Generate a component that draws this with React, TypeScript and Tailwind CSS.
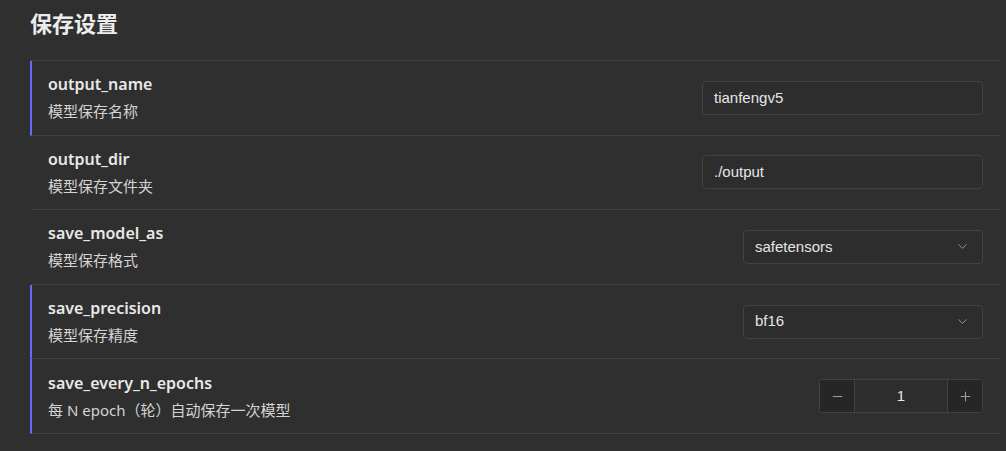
import { ChevronDown, Minus, Plus } from "lucide-react";

type Field =
  | { key: string; desc: string; kind: "text"; value: string; changed?: boolean }
  | { key: string; desc: string; kind: "select"; value: string; changed?: boolean }
  | { key: string; desc: string; kind: "number"; value: number; changed?: boolean };

const fields: Field[] = [
  { key: "output_name", desc: "模型保存名称", kind: "text", value: "tianfengv5", changed: true },
  { key: "output_dir", desc: "模型保存文件夹", kind: "text", value: "./output" },
  { key: "save_model_as", desc: "模型保存格式", kind: "select", value: "safetensors" },
  { key: "save_precision", desc: "模型保存精度", kind: "select", value: "bf16", changed: true },
  { key: "save_every_n_epochs", desc: "每 N epoch（轮）自动保存一次模型", kind: "number", value: 1, changed: true },
];

function Control({ field }: { field: Field }) {
  if (field.kind === "text") {
    return (
      <div className="w-[281px] h-[34px] flex items-center px-[11px] rounded border border-[#434343] bg-[#2d2d2d] text-[15px] text-[#e6e6e6] font-['Liberation_Sans',sans-serif]">
        {field.value}
      </div>
    );
  }
  if (field.kind === "select") {
    return (
      <div className="w-[240px] h-[34px] flex items-center justify-between pl-[11px] pr-3 rounded border border-[#434343] bg-[#2d2d2d] text-[15px] text-[#e6e6e6] font-['Liberation_Sans',sans-serif]">
        <span>{field.value}</span>
        <ChevronDown size={15} strokeWidth={1.5} className="text-[#9a9a9a]" />
      </div>
    );
  }
  return (
    <div className="w-[164px] h-[34px] flex rounded border border-[#434343] overflow-hidden text-[15px] text-[#e6e6e6] font-['Liberation_Sans',sans-serif]">
      <div className="w-[35px] flex items-center justify-center bg-[#262626] border-r border-[#434343] text-[#a8a8a8]">
        <Minus size={15} strokeWidth={1.5} />
      </div>
      <div className="flex-1 flex items-center justify-center bg-[#2d2d2d]">{field.value}</div>
      <div className="w-[35px] flex items-center justify-center bg-[#262626] border-l border-[#434343] text-[#a8a8a8]">
        <Plus size={15} strokeWidth={1.5} />
      </div>
    </div>
  );
}

export default function App() {
  return (
    <div className="w-[1006px] h-[451px] bg-[#2f2f2f] pl-[30px] pr-[5px] overflow-hidden font-['Noto_Sans','Noto_Sans_CJK_SC',sans-serif]">
      <h2 className="pt-[7px] h-[60px] text-[22px] font-bold text-[#ececec] leading-[32px]">保存设置</h2>
      <div className="border-t border-[#404040]">
        {fields.map((f) => (
          <div
            key={f.key}
            className={`h-[74.6px] flex items-center justify-between border-b border-[#404040] pr-[18px] border-l-2 ${
              f.changed ? "border-l-[#646cff]" : "border-l-transparent"
            }`}
          >
            <div className="pl-4 flex flex-col">
              <span className="text-[16px] font-semibold text-[#e8e8e8] leading-[22px]">{f.key}</span>
              <span className="mt-[5px] text-[15px] text-[#d4d4d4] leading-[22px]">{f.desc}</span>
            </div>
            <Control field={f} />
          </div>
        ))}
      </div>
    </div>
  );
}
